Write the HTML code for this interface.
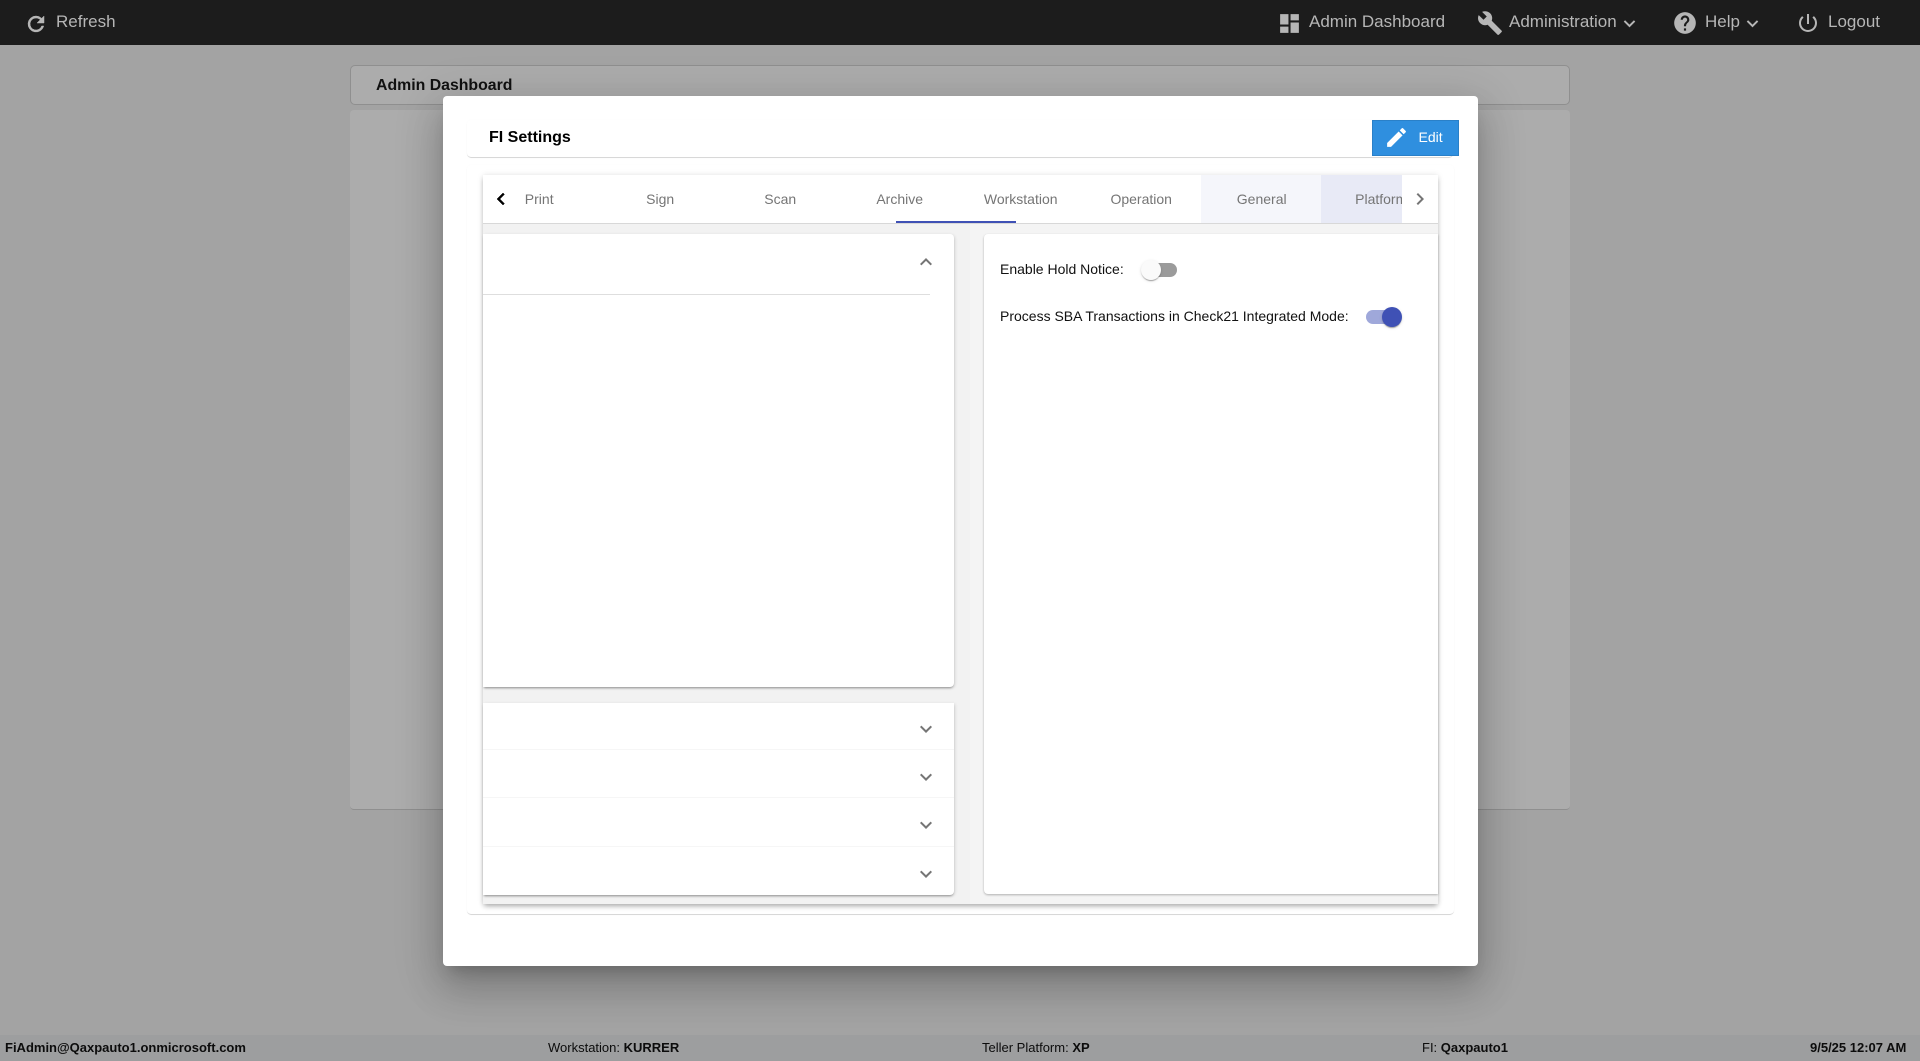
<!DOCTYPE html>
<html lang="en"><head><meta charset="utf-8"><title>FI Settings</title>
<style>
*{box-sizing:border-box}
html,body{margin:0;padding:0;width:1920px;height:1061px;overflow:hidden;background:#a3a3a3;font-family:"Liberation Sans",sans-serif}
.a{position:absolute}
.t{position:absolute;white-space:nowrap;line-height:20px}
.n{color:#b6b6b6;font-size:17px;top:12px}
svg{position:absolute;display:block}
.tab{position:absolute;top:175px;height:48px;width:120.4px;line-height:48px;text-align:center;font-size:14px;color:#757575;white-space:nowrap}
.f{top:1038px;font-size:13px;color:#0c0c0c}
.f b{font-weight:bold}
.s{color:#111;font-size:14px}
</style></head><body>
<div class="a" style="left:0;top:1035px;width:1920px;height:26px;background:#9d9e9f"></div>
<div class="a" style="left:0;top:0;width:1920px;height:45px;background:#1c1c1c"></div>
<svg style="left:24px;top:12px" width="24" height="24" viewBox="0 0 24 24" fill="#b6b6b6" stroke="#b6b6b6" stroke-width=".5"><path d="M17.65 6.35A7.96 7.96 0 0 0 12 4a8 8 0 1 0 7.75 10h-2.08A6 6 0 1 1 12 6c1.66 0 3.14.69 4.22 1.78L13 11h7V4l-2.35 2.35z"/></svg>
<div class="t n" style="left:56px">Refresh</div>
<svg style="left:1277px;top:11px" width="25" height="25" viewBox="0 0 24 24" fill="#b6b6b6"><path d="M3 13h8V3H3v10zm0 8h8v-6H3v6zm10 0h8V11h-8v10zm0-18v6h8V3h-8z"/></svg>
<div class="t n" style="left:1309px">Admin Dashboard</div>
<svg style="left:1477px;top:10px" width="26" height="26" viewBox="0 0 24 24" fill="#b6b6b6"><path d="M22.7 19l-9.1-9.1c.9-2.3.4-5-1.5-6.9-2-2-5-2.4-7.4-1.3L9 6 6 9 1.600 4.700C.4 7.100.9 10.100 2.900 12.100c1.900 1.900 4.600 2.400 6.900 1.500l9.100 9.100c.4.400 1 .4 1.400 0l2.300-2.300c.5-.4.5-1.100.1-1.400z"/></svg>
<div class="t n" style="left:1509px">Administration</div>
<svg style="left:1618px;top:12px" width="23" height="23" viewBox="0 0 24 24" fill="#b6b6b6"><path d="M7.410 8.590L12 13.170l4.590-4.580L18 10l-6 6-6-6z"/></svg>
<svg style="left:1672px;top:10px" width="26" height="26" viewBox="0 0 24 24" fill="#b6b6b6"><path d="M12 2a10 10 0 1 0 0 20 10 10 0 0 0 0-20zm1 17h-2v-2h2v2zm2.070-7.750l-.9.920C13.450 12.900 13 13.500 13 15h-2v-.5c0-1.100.45-2.100 1.170-2.830l1.240-1.260c.37-.36.590-.86.590-1.410a2 2 0 0 0-4 0H8a4 4 0 0 1 8 0c0 .88-.36 1.680-.93 2.250z"/></svg>
<div class="t n" style="left:1705px">Help</div>
<svg style="left:1741px;top:12px" width="23" height="23" viewBox="0 0 24 24" fill="#b6b6b6"><path d="M7.410 8.590L12 13.170l4.590-4.580L18 10l-6 6-6-6z"/></svg>
<svg style="left:1796px;top:11px" width="24" height="24" viewBox="0 0 24 24" fill="#b6b6b6"><path d="M13 3h-2v10h2V3zm4.830 2.170l-1.420 1.420A6.920 6.920 0 0 1 19 12a7 7 0 1 1-11.420-5.420L6.170 5.170A8.932 8.932 0 0 0 3 12a9 9 0 0 0 18 0c0-2.740-1.230-5.180-3.170-6.830z"/></svg>
<div class="t n" style="left:1828px">Logout</div>

<div class="a" style="left:350px;top:65px;width:1220px;height:40px;background:#acacac;border:1px solid #8f8f8f;border-radius:5px"></div>
<div class="t" style="left:376px;top:76px;font-size:15.85px;font-weight:bold;color:#111">Admin Dashboard</div>
<div class="a" style="left:350px;top:110px;width:1220px;height:700px;background:#acacac;border-bottom:1px solid #8f8f8f;border-radius:4px"></div>

<div class="a" style="left:443px;top:96px;width:1035px;height:870px;background:#fff;border-radius:4px;box-shadow:0 11px 15px -7px rgba(0,0,0,.2),0 24px 38px 3px rgba(0,0,0,.14),0 9px 46px 8px rgba(0,0,0,.12)"></div>
<div class="a" style="left:467px;top:120px;width:986px;height:37px;background:#fff;border-radius:4px;box-shadow:0 1px 1px -.5px rgba(0,0,0,.3),0 0 2px rgba(0,0,0,.02)"></div>
<div class="t" style="left:489px;top:128px;font-size:16px;font-weight:bold;color:#000">FI Settings</div>
<div class="a" style="left:1372px;top:120px;width:87px;height:36px;background:#2f8fdf;border:1px solid #2a80c8"></div>
<svg style="left:1384px;top:125px" width="25" height="25" viewBox="0 0 24 24" fill="#fff"><path d="M3 17.250V21h3.750L17.810 9.940l-3.750-3.750L3 17.250zM20.710 7.040a1 1 0 0 0 0-1.410l-2.340-2.340a1 1 0 0 0-1.410 0l-1.830 1.830 3.750 3.750 1.830-1.830z"/></svg>
<div class="t" style="left:1418.500px;top:127px;font-size:14px;color:#fff">Edit</div>

<div class="a" style="left:467px;top:165px;width:987px;height:749px;background:#fff;border-radius:4px;box-shadow:0 1px 1px -.5px rgba(0,0,0,.3),0 0 2px rgba(0,0,0,.02)"></div>
<div class="a" style="left:483px;top:175px;width:955px;height:729px;background:#f2f2f2;box-shadow:0 3px 5px -1px rgba(0,0,0,.3),0 0 6px rgba(0,0,0,.1)"></div>
<div class="a" style="left:970px;top:224px;width:468px;height:680px;background:#f4f4f4"></div>
<div class="a" style="left:483px;top:175px;width:955px;height:48px;background:#fff"></div>
<div class="a" style="left:483px;top:223px;width:955px;height:1px;background:#d8d8d8"></div>
<div class="a" style="left:1201px;top:175px;width:120px;height:48px;background:#f5f6fb"></div>
<div class="a" style="left:1321px;top:175px;width:80.500px;height:48px;background:#e8eaf6"></div>
<div class="tab" style="left:479px">Print</div>
<div class="tab" style="left:600px">Sign</div>
<div class="tab" style="left:720px">Scan</div>
<div class="tab" style="left:839.500px">Archive</div>
<div class="tab" style="left:960.500px">Workstation</div>
<div class="tab" style="left:1081px">Operation</div>
<div class="tab" style="left:1201.500px">General</div>
<div class="a" style="left:1321px;top:175px;width:80.500px;height:48px;overflow:hidden"><div class="tab" style="left:0;top:0">Platform</div></div>
<div class="a" style="left:896px;top:221px;width:120px;height:2px;background:#3f51b5"></div>
<svg style="left:489px;top:187px" width="24" height="24" viewBox="0 0 24 24" fill="#000" stroke="#000" stroke-width=".5"><path d="M15.410 7.410L14 6l-6 6 6 6 1.410-1.410L10.830 12z"/></svg>
<svg style="left:1408px;top:187px" width="24" height="24" viewBox="0 0 24 24" fill="#757575"><path d="M8.590 16.590L10 18l6-6-6-6-1.410 1.410L13.170 12z"/></svg>

<div class="a" style="left:483px;top:234px;width:471px;height:453px;background:#fff;border-radius:0 4px 4px 0;box-shadow:0 2px 2px -1px rgba(0,0,0,.35),1px 1px 3px rgba(0,0,0,.12)"></div>
<div class="a" style="left:483px;top:294px;width:447px;height:1px;background:#dedede"></div>
<svg style="left:914px;top:250px" width="24" height="24" viewBox="0 0 24 24" fill="#757575"><path d="M7.410 15.410L12 10.830l4.590 4.580L18 14l-6-6-6 6z"/></svg>

<div class="a" style="left:483px;top:703px;width:471px;height:192px;background:#fff;border-radius:0 0 4px 0;box-shadow:0 2px 2px -1px rgba(0,0,0,.35),1px 1px 3px rgba(0,0,0,.12)"></div>
<div class="a" style="left:483px;top:749px;width:471px;height:1px;background:#f6f6f6"></div>
<div class="a" style="left:483px;top:797px;width:471px;height:1px;background:#f6f6f6"></div>
<div class="a" style="left:483px;top:846px;width:471px;height:1px;background:#f6f6f6"></div>
<svg style="left:914px;top:717px" width="24" height="24" viewBox="0 0 24 24" fill="#757575"><path d="M7.410 8.590L12 13.170l4.590-4.580L18 10l-6 6-6-6z"/></svg>
<svg style="left:914px;top:765px" width="24" height="24" viewBox="0 0 24 24" fill="#757575"><path d="M7.410 8.590L12 13.170l4.590-4.580L18 10l-6 6-6-6z"/></svg>
<svg style="left:914px;top:813px" width="24" height="24" viewBox="0 0 24 24" fill="#757575"><path d="M7.410 8.590L12 13.170l4.590-4.580L18 10l-6 6-6-6z"/></svg>
<svg style="left:914px;top:862px" width="24" height="24" viewBox="0 0 24 24" fill="#757575"><path d="M7.410 8.590L12 13.170l4.590-4.580L18 10l-6 6-6-6z"/></svg>

<div class="a" style="left:984px;top:234px;width:454px;height:660px;background:#fff;border-radius:4px 0 0 4px;box-shadow:0 1px 2px rgba(0,0,0,.28)"></div>
<div class="t s" style="left:1000px;top:259px">Enable Hold Notice:</div>
<div class="a" style="left:1143px;top:263px;width:34px;height:14px;border-radius:7px;background:#9b9b9b"></div>
<div class="a" style="left:1141px;top:260px;width:20px;height:20px;border-radius:50%;background:#fafafa;box-shadow:0 2px 1px -1px rgba(0,0,0,.2),0 1px 1px rgba(0,0,0,.14),0 1px 3px rgba(0,0,0,.12)"></div>
<div class="t s" style="left:1000px;top:306px">Process SBA Transactions in Check21 Integrated Mode:</div>
<div class="a" style="left:1366px;top:310px;width:34px;height:14px;border-radius:7px;background:#9fa8da"></div>
<div class="a" style="left:1382px;top:307px;width:20px;height:20px;border-radius:50%;background:#3f51b5;box-shadow:0 2px 1px -1px rgba(0,0,0,.2),0 1px 1px rgba(0,0,0,.14),0 1px 3px rgba(0,0,0,.12)"></div>

<div class="t f" style="left:5px"><b>FiAdmin@Qaxpauto1.onmicrosoft.com</b></div>
<div class="t f" style="left:548px">Workstation: <b>KURRER</b></div>
<div class="t f" style="left:982px">Teller Platform: <b>XP</b></div>
<div class="t f" style="left:1422px">FI: <b>Qaxpauto1</b></div>
<div class="t f" style="left:1810px"><b>9/5/25 12:07 AM</b></div>
</body></html>
